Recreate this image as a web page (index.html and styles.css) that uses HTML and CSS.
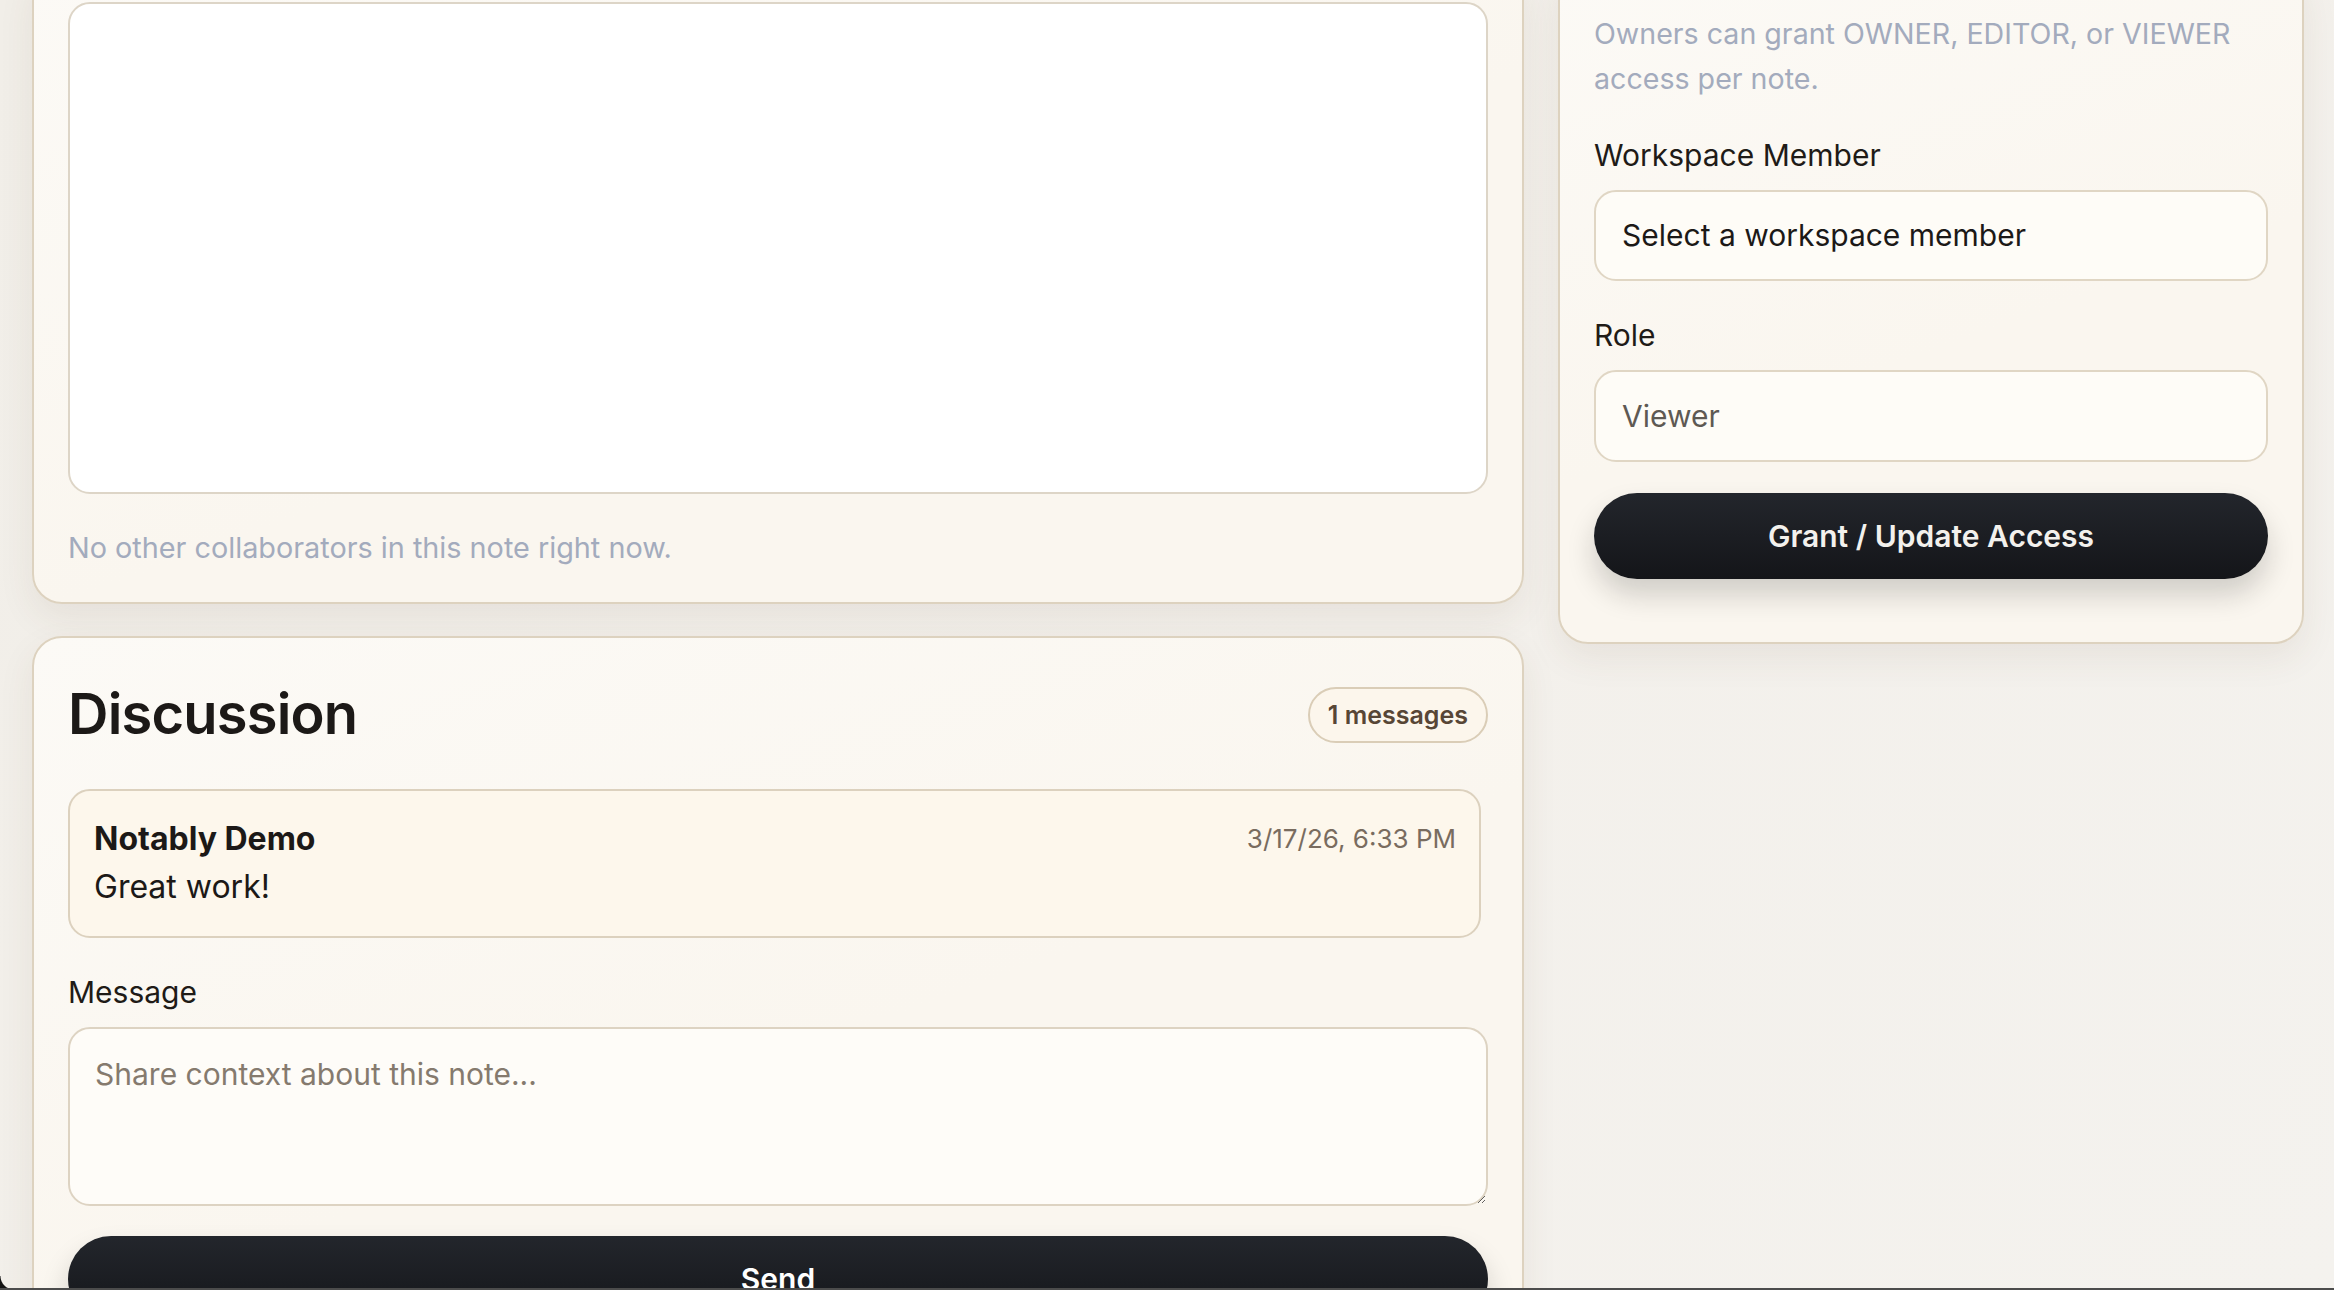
FILE: index.html
```html
<!DOCTYPE html>
<html lang="en">
<head>
<meta charset="utf-8">
<title>Note collaboration</title>
<link rel="stylesheet" href="styles.css">
</head>
<body>
<div class="page">
  <div class="layout">
    <div class="main-col">
      <section class="card card-editor">
        <div class="editor-surface"></div>
        <p class="muted-note">No other collaborators in this note right now.</p>
      </section>
      <section class="card card-discussion">
        <header class="discussion-head">
          <h2 class="discussion-title">Discussion</h2>
          <span class="pill">1 messages</span>
        </header>
        <ul class="message-list">
          <li class="message">
            <div class="message-meta">
              <strong class="message-author">Notably Demo</strong>
              <time class="message-time">3/17/26, 6:33 PM</time>
            </div>
            <p class="message-body">Great work!</p>
          </li>
        </ul>
        <form class="message-form">
          <label class="field-label" for="msg">Message</label>
          <textarea id="msg" class="textarea" placeholder="Share context about this note..."></textarea>
          <button class="btn-primary btn-send" type="button">Send</button>
        </form>
      </section>
    </div>
    <aside class="card card-share">
      <p class="share-hint">Owners can grant OWNER, EDITOR, or VIEWER access per note.</p>
      <div class="field">
        <label class="field-label" for="member">Workspace Member</label>
        <select id="member" class="select">
          <option>Select a workspace member</option>
        </select>
      </div>
      <div class="field field-role">
        <label class="field-label" for="role">Role</label>
        <select id="role" class="select select-muted">
          <option>Viewer</option>
        </select>
      </div>
      <button class="btn-primary btn-grant" type="button">Grant / Update Access</button>
    </aside>
  </div>
</div>
<div class="corner-mask"></div>
<div class="bottom-edge"></div>
</body>
</html>
```

FILE: styles.css
```css
html, body {
  margin: 0;
  height: 1290px;
  overflow: hidden;
}

body {
  background: linear-gradient(135deg, #f1eee8 0%, #f3f0eb 55%, #f4f2ee 100%);
  font-family: Inter, "Noto Sans", "Liberation Sans", sans-serif;
  color: #1c1917;
}

.page {
  padding: 0 30px 0 32px;
}

.layout {
  display: grid;
  grid-template-columns: 2fr 1fr;
  column-gap: 34px;
  align-items: start;
  margin-top: -34px;
}

.main-col {
  display: flex;
  flex-direction: column;
  gap: 32px;
}

.card {
  background: linear-gradient(160deg, #fcfaf6 0%, #faf6ef 55%, #faf6ef 100%);
  border: 2px solid #ddd2bf;
  border-radius: 30px;
  box-shadow: 0 14px 36px rgba(90, 70, 40, 0.08);
}

.card-editor {
  padding: 34px 34px 32px;
}

.editor-surface {
  height: 492px;
  box-sizing: border-box;
  background: #ffffff;
  border: 2px solid #ddd5c7;
  border-radius: 22px;
}

.muted-note {
  margin: 31px 0 0;
  font-size: 28.8px;
  line-height: 45px;
  color: #a3abbd;
}

.card-discussion {
  padding: 43px 34px 34px;
}

.discussion-head {
  display: flex;
  justify-content: space-between;
  align-items: center;
}

.discussion-title {
  margin: 0;
  font-size: 56px;
  line-height: 67.5px;
  font-weight: 600;
  letter-spacing: -0.8px;
  color: #1c1917;
}

.pill {
  box-sizing: border-box;
  height: 56px;
  display: inline-flex;
  align-items: center;
  padding: 0 18px;
  border: 2px solid #dacdb7;
  border-radius: 999px;
  background: #fcf6ec;
  font-size: 25px;
  font-weight: 600;
  color: #574636;
}

.message-list {
  list-style: none;
  margin: 40.5px 0 0;
  padding: 0 7px 0 0;
}

.message {
  border: 2px solid #dcd1be;
  border-radius: 22px;
  background: #fdf7ec;
  padding: 24px 23px 25px 24px;
}

.message-meta {
  display: flex;
  justify-content: space-between;
  align-items: center;
  line-height: 48px;
}

.message-author {
  font-size: 32px;
  font-weight: 700;
  color: #1c1917;
}

.message-time {
  font-size: 26px;
  color: #796c5f;
}

.message-body {
  margin: 0;
  font-size: 32px;
  line-height: 48px;
  color: #1c1917;
}

.message-form {
  display: flex;
  flex-direction: column;
  margin-top: 31.5px;
}

.field-label {
  font-size: 30px;
  line-height: 45px;
  color: #1f1b17;
}

.textarea {
  margin-top: 12.5px;
  height: 179px;
  box-sizing: border-box;
  padding: 22.5px 25px;
  border: 2px solid #ddd3c2;
  border-radius: 22px;
  background: #fefcf8;
  font-family: Inter, "Noto Sans", "Liberation Sans", sans-serif;
  font-size: 30px;
  line-height: 45px;
  color: #1c1917;
  resize: vertical;
  outline: none;
}

.textarea::placeholder {
  color: #857a6e;
  opacity: 1;
}

.btn-primary {
  height: 86px;
  border: 0;
  border-radius: 999px;
  background: linear-gradient(180deg, #23262c 0%, #141519 100%);
  color: #f3f1ed;
  font-family: Inter, "Noto Sans", "Liberation Sans", sans-serif;
  font-size: 30px;
  line-height: 45px;
  font-weight: 600;
  box-shadow: 0 16px 28px rgba(20, 20, 20, 0.18);
  cursor: pointer;
}

.btn-send {
  margin-top: 30px;
  color: #ffffff;
}

.card-share {
  padding: 43px 34px 63px;
}

.share-hint {
  margin: 0 0 31.5px;
  font-size: 28.6px;
  line-height: 45px;
  color: #a3abbd;
}

.field {
  display: flex;
  flex-direction: column;
  gap: 12px;
}

.field-role {
  margin-top: 32.5px;
}

.select {
  -webkit-appearance: none;
  appearance: none;
  height: 91px;
  box-sizing: border-box;
  padding: 0 26px;
  border: 2px solid #e0d6c4;
  border-radius: 22px;
  background: #fefcf7;
  font-family: Inter, "Noto Sans", "Liberation Sans", sans-serif;
  font-size: 30px;
  color: #1c1917;
  outline: none;
}

.select-muted {
  height: 92px;
  color: #5e5953;
}

.btn-grant {
  width: 100%;
  margin-top: 31px;
}

.corner-mask {
  position: fixed;
  left: 0;
  bottom: 0;
  width: 14px;
  height: 14px;
  background: radial-gradient(circle at 14px 0, transparent 13px, #141414 14px);
}

.bottom-edge {
  position: fixed;
  left: 0;
  right: 0;
  bottom: 0;
  height: 2px;
  background: #4c4c4c;
}
```
